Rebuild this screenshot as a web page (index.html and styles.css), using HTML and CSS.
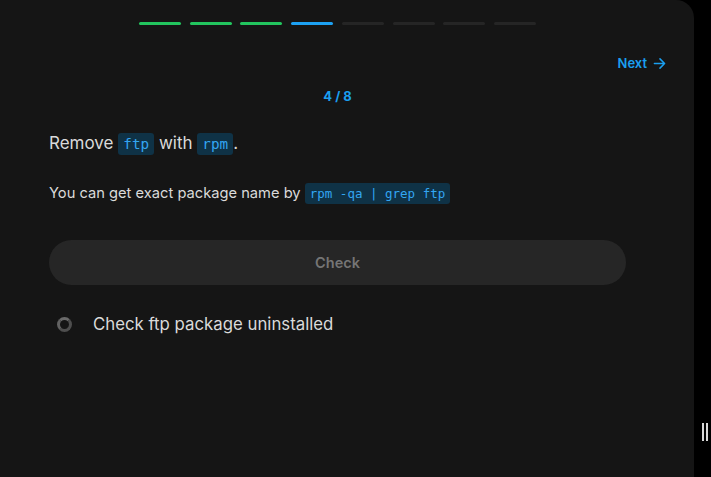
FILE: index.html
```html
<!DOCTYPE html>
<html lang="en">
<head>
<meta charset="utf-8">
<title>Step 4 of 8</title>
<link rel="stylesheet" href="styles.css">
</head>
<body>
<div class="layout">
  <main class="panel">
    <div class="progress">
      <span class="bar done"></span>
      <span class="bar done"></span>
      <span class="bar done"></span>
      <span class="bar current"></span>
      <span class="bar"></span>
      <span class="bar"></span>
      <span class="bar"></span>
      <span class="bar"></span>
    </div>
    <div class="nav">
      <a class="next" href="#">Next
        <svg class="arrow" width="13" height="13" viewBox="0 0 14 14" fill="none" stroke="currentColor" stroke-width="1.6" stroke-linecap="round" stroke-linejoin="round"><path d="M1.5 7h11M7.5 2l5 5-5 5"/></svg>
      </a>
    </div>
    <div class="content">
      <div class="step">4 / 8</div>
      <p class="task">Remove <code>ftp</code> with <code>rpm</code>.</p>
      <p class="hint">You can get exact package name by <code>rpm -qa | grep ftp</code></p>
      <button class="check" type="button">Check</button>
      <ul class="checks">
        <li class="check-item"><span class="ring"></span>Check ftp package uninstalled</li>
      </ul>
    </div>
  </main>
  <div class="gutter">
    <span class="handle"></span>
  </div>
</div>
</body>
</html>
```

FILE: styles.css
```css
* { box-sizing: border-box; }
html, body { margin: 0; height: 100%; }
body {
  background: #000;
  font-family: Inter, "Noto Sans", sans-serif;
  color: #dadada;
  overflow: hidden;
}
.layout {
  display: flex;
  height: 477px;
}
.panel {
  width: 694px;
  height: 100%;
  background: #151515;
  border-top-right-radius: 18px;
  padding: 22px 28px 0 49px;
}
.progress {
  display: flex;
  justify-content: center;
  gap: 8.7px;
  margin-right: 40px;
}
.bar {
  width: 42px;
  height: 3px;
  border-radius: 2px;
  background: #252525;
}
.bar.done { background: #22c55e; }
.bar.current { background: #1da1f2; }
.nav {
  display: flex;
  justify-content: flex-end;
  margin-top: 28px;
}
.next {
  display: flex;
  align-items: center;
  gap: 6px;
  color: #1a9ff0;
  text-decoration: none;
  font-size: 13px;
  font-weight: 600;
  line-height: 20px;
}
.arrow { display: block; }
.content {
  margin-right: 40px;
}
.step {
  text-align: center;
  color: #1a9ff0;
  font-size: 13px;
  font-weight: 700;
  line-height: 18px;
  margin-top: 14px;
}
.task {
  margin: 26px 0 0;
  font-size: 17px;
  line-height: 24px;
}
.hint {
  margin: 26px 0 0;
  font-size: 14.7px;
  line-height: 22px;
}
code {
  font-family: "DejaVu Sans Mono", monospace;
  background: #0f3246;
  color: #33a6f2;
  border-radius: 3px;
  padding: 3px 5px;
  font-size: 14.3px;
}
.hint code {
  font-size: 12.5px;
  padding: 3px 5px;
}
.check {
  display: block;
  width: 100%;
  height: 45px;
  margin-top: 35px;
  border: 0;
  border-radius: 23px;
  background: #262626;
  color: #757575;
  font-family: Inter, "Noto Sans", sans-serif;
  font-size: 14.5px;
  font-weight: 600;
}
.checks {
  list-style: none;
  margin: 28px 0 0;
  padding: 0 0 0 8px;
}
.check-item {
  display: flex;
  align-items: center;
  gap: 21px;
  font-size: 16.8px;
  line-height: 22px;
}
.ring {
  width: 15px;
  height: 15px;
  border-radius: 50%;
  border: 3px solid #4e4e4e;
  border-top-color: #6a6a6a;
  border-left-color: #626262;
}
.gutter {
  flex: 1;
  display: flex;
  justify-content: center;
  align-items: flex-end;
  padding-bottom: 36px;
}
.handle {
  width: 6px;
  height: 18px;
  border-left: 2px solid #d8d8d8;
  border-right: 2px solid #d8d8d8;
  margin-left: 4px;
}
```
